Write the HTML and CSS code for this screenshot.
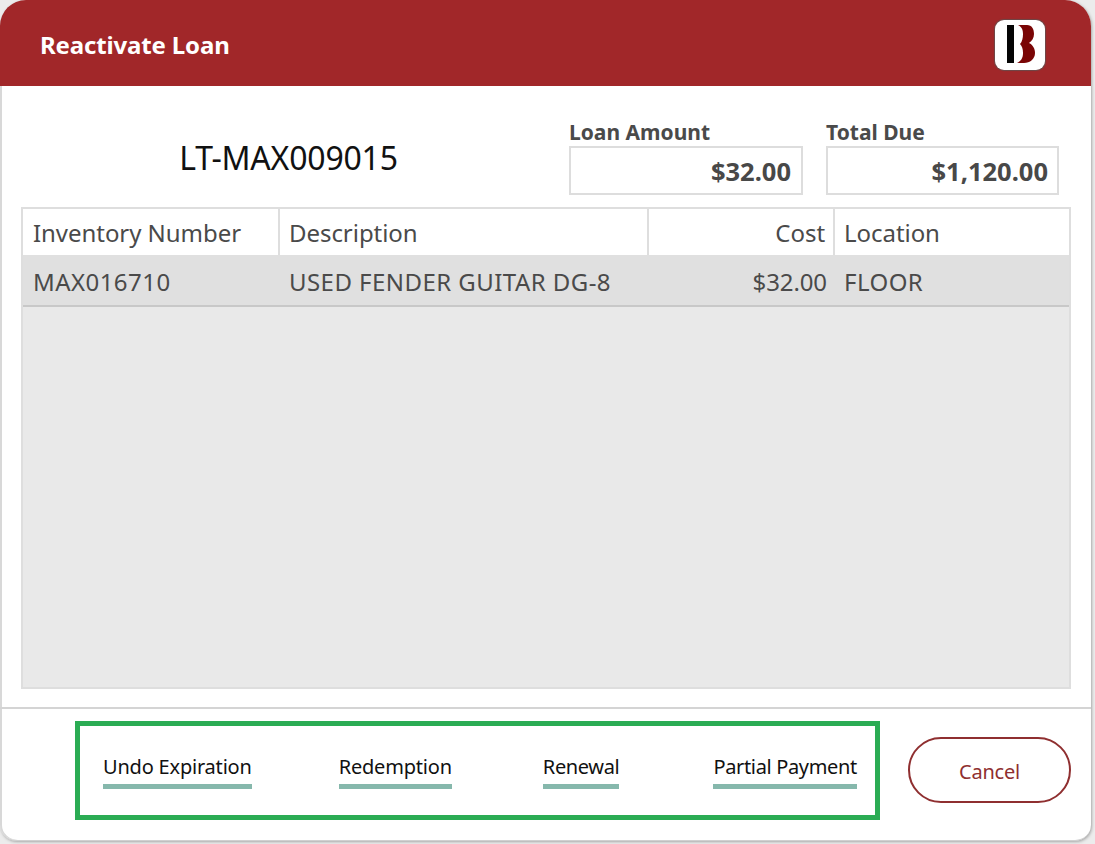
FILE: index.html
```html
<!DOCTYPE html>
<html lang="en">
<head>
<meta charset="utf-8">
<title>Reactivate Loan</title>
<link rel="stylesheet" href="styles.css">
</head>
<body>
<div class="dialog">
  <header class="titlebar">
    <h1 class="title">Reactivate Loan</h1>
    <div class="logo">
      <svg width="50" height="50" viewBox="0 0 50 50">
        <rect x="12" y="5" width="7" height="38" fill="#050505"/>
        <path d="M23 5H32C37 5 39 9 39 14C39 18 37 21 34 23C38 25 40 29 40 33C40 39 35 43 29 43H22C26 41 28 38 28 33C28 29 27 26 25 24C27 22 28 18 28 14C28 10 27 7 23 5Z" fill="#7a0505"/>
      </svg>
    </div>
  </header>
  <section class="summary">
    <div class="loan-id">LT-MAX009015</div>
    <div class="amount amount-loan">
      <div class="amount-label">Loan Amount</div>
      <div class="amount-value">$32.00</div>
    </div>
    <div class="amount amount-total">
      <div class="amount-label">Total Due</div>
      <div class="amount-value">$1,120.00</div>
    </div>
  </section>
  <section class="grid">
    <div class="row head">
      <div class="cell c1">Inventory Number</div>
      <div class="cell c2">Description</div>
      <div class="cell c3">Cost</div>
      <div class="cell c4">Location</div>
    </div>
    <div class="row item">
      <div class="cell c1">MAX016710</div>
      <div class="cell c2">USED FENDER GUITAR DG-8</div>
      <div class="cell c3">$32.00</div>
      <div class="cell c4">FLOOR</div>
    </div>
  </section>
  <footer class="footer">
    <div class="actions">
      <a class="action">Undo Expiration</a>
      <a class="action">Redemption</a>
      <a class="action">Renewal</a>
      <a class="action">Partial Payment</a>
    </div>
    <button class="cancel">Cancel</button>
  </footer>
</div>
</body>
</html>
```
FILE: styles.css
```css
* { box-sizing: border-box; }
html, body { margin: 0; padding: 0; width: 1095px; height: 844px; overflow: hidden; background: #ececec; }
body { font-family: "Noto Sans", "Open Sans", sans-serif; }
.dialog {
  width: 1091px; height: 841px; background: #fff;
  border-radius: 26px 26px 16px 16px; overflow: hidden;
  box-shadow: inset 2px 0 #d8d8d8, 1px 1px 3px #a8a8a8;
  display: flex; flex-direction: column;
  border-bottom: 1px solid #d0d0d0;
}
.titlebar {
  height: 86px; flex: none; background: #a12729;
  display: flex; align-items: center; justify-content: space-between;
  padding: 0 46px 0 40px;
}
.title { margin: 2px 0 0; color: #fff; font-size: 24px; font-weight: 700; letter-spacing: -0.15px; }
.logo {
  width: 50px; height: 50px; margin-top: 4px; background: #fff; border-radius: 9px;
  box-shadow: 0 0 1px 1px #6b4a4a;
  display: flex; align-items: center; justify-content: center;
}
.summary { height: 121px; flex: none; display: flex; align-items: flex-end; padding: 0 0 12px 0; }
.loan-id { width: 569px; text-align: center; font-size: 32px; line-height: 49px; color: #111; letter-spacing: -0.2px; padding-bottom: 13px; padding-left: 8px; }
.amount-loan { width: 234px; }
.amount-total { width: 233px; margin-left: 23px; }
.amount-label { font-size: 21px; line-height: 24px; padding-bottom: 2px; font-weight: 700; color: #4a4a4a; }
.amount-value {
  height: 49px; border: 2px solid #ddd; padding: 0 10px;
  text-align: right; font-size: 25.5px; line-height: 47px; font-weight: 700; color: #484848;
}
.amount-total .amount-value { padding-right: 9px; }
.grid { width: 1050px; height: 482px; margin-left: 21px; flex: none; background: #e9e9e9; border: 2px solid #dedede; }
.row { display: flex; font-size: 24px; color: #4a4a4a; }
.head { height: 46px; background: #fff; line-height: 46px; padding-top: 1px; letter-spacing: -0.05px; }
.item { height: 52px; background: #e0e0e0; line-height: 52px; padding-top: 1px; border-bottom: 2px solid #c8c8c8; letter-spacing: 0.45px; }
.cell { padding-left: 10px; white-space: nowrap; }
.c1 { width: 257px; }
.c2 { width: 369px; padding-left: 9px; }
.c3 { width: 186px; text-align: right; padding-right: 8px; padding-left: 0; }
.item .c3 { letter-spacing: -0.1px; }
.c4 { flex: 1; padding-left: 9px; }
.head .cell { border-right: 2px solid #dedede; margin-top: -1px; padding-top: 1px; }
.head .c4 { border-right: 0; }
.footer {
  margin-top: 18px; flex: 1; border-top: 2px solid #d4d4d4;
  display: flex; align-items: flex-start; padding: 12px 19px 0 75px; gap: 28px;
}
.actions {
  width: 805px; height: 99px; border: 5px solid #2bac54;
  display: flex; align-items: flex-start;
  padding: 26px 0 0 23px;
}
.action {
  font-size: 20px; line-height: 30px; height: 37px; color: #111; letter-spacing: -0.2px;
  border-bottom: 5px solid #86b8ac; display: block; white-space: nowrap;
}
.action:nth-child(2) { margin-left: 87px; }
.action:nth-child(3) { margin-left: 91px; letter-spacing: -0.35px; }
.action:nth-child(4) { margin-left: 94px; letter-spacing: -0.35px; }
.cancel {
  width: 163px; height: 66px; margin-top: 16px; border: 2px solid #8f2f30; border-radius: 33px;
  background: #fff; color: #8f2f30; font: 20px "Noto Sans", "Open Sans", sans-serif; letter-spacing: -0.2px; padding: 2px 0 0;
}
```
